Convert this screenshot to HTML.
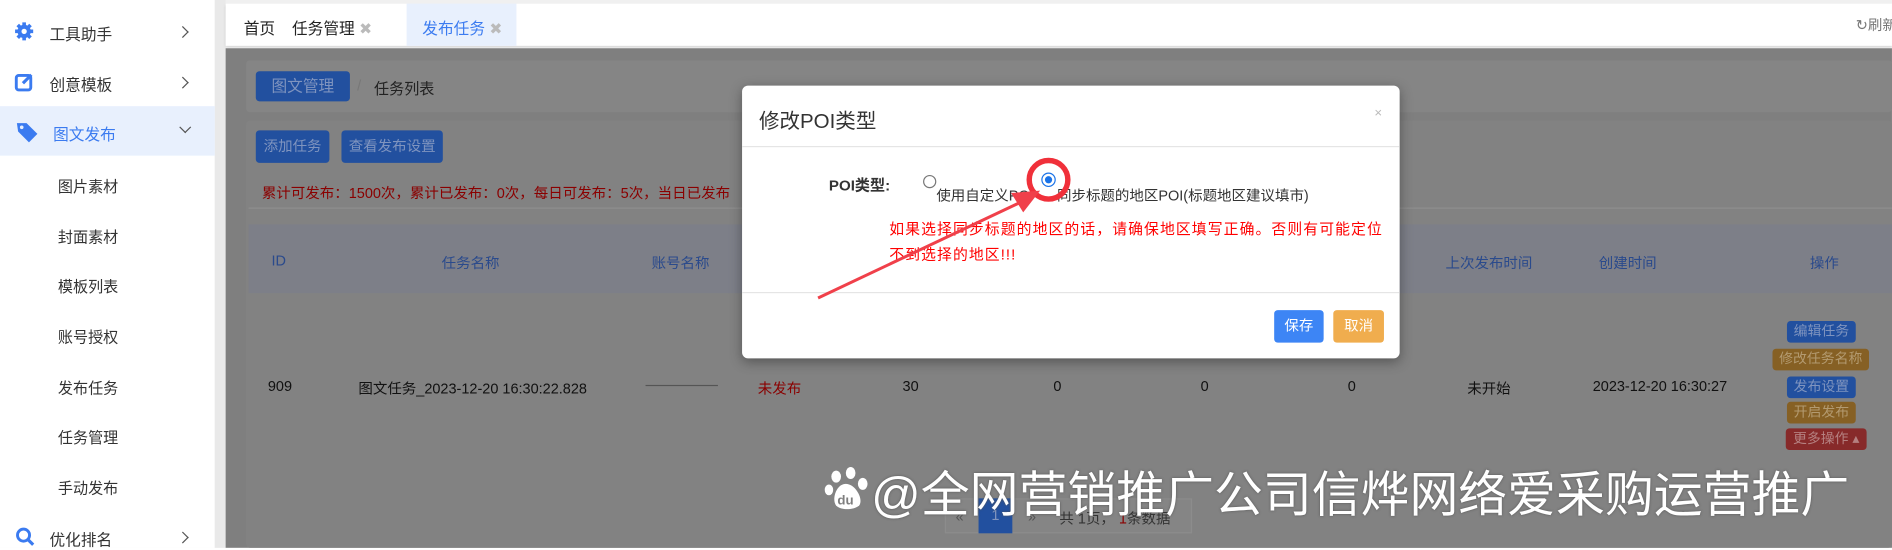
<!DOCTYPE html>
<html><head><meta charset="utf-8"><style>
*{margin:0;padding:0;box-sizing:border-box}
body{width:1892px;height:548px;overflow:hidden;background:#fff;font-family:"Liberation Sans","Noto Sans CJK SC",sans-serif;font-size:12px;color:#333}
#w{position:absolute;left:0;top:0;width:1568px;height:454px;transform:scale(1.2066);transform-origin:0 0;background:#f0f0f0}
.a{position:absolute;white-space:nowrap}
.side{left:0;top:0;width:178px;height:454px;background:#fff}
.mi{font-size:13px;color:#333}
.sub{left:48px;font-size:12.5px;color:#333}
.chev{position:absolute;left:150px;width:7px;height:7px;border-right:1.3px solid #555;border-top:1.3px solid #555;transform:rotate(45deg)}
.main{left:187px;top:40px;width:1381px;height:414px;background:#7f7f7f}
.btn{position:absolute;background:#22509f;color:#7f94bf;border-radius:3px;text-align:center;font-size:12px}
.th{color:#2a4a8c;font-size:12px}
.td{color:#111;font-size:12px}
.ob{position:absolute;border-radius:3px;text-align:center;font-size:11.5px;height:18px;line-height:18px}
</style></head><body><div id="w">
<div class="a side"></div>
<div class="a" style="left:178px;top:0;width:9px;height:454px;background:#e9e9e9"></div>
<svg class="a" style="left:12px;top:18px" width="16" height="16" viewBox="0 0 16 16"><circle cx="8" cy="8" r="5.5" fill="#3b7bf0"/><g stroke="#3b7bf0" stroke-width="3"><line x1="8" y1="0.5" x2="8" y2="15.5"/><line x1="0.5" y1="8" x2="15.5" y2="8"/><line x1="2.7" y1="2.7" x2="13.3" y2="13.3"/><line x1="13.3" y1="2.7" x2="2.7" y2="13.3"/></g><circle cx="8" cy="8" r="2.2" fill="#fff"/></svg>
<div class="a mi" style="left:41px;top:18px">工具助手</div><div class="chev" style="top:23px;left:148px"></div>
<svg class="a" style="left:12px;top:60px" width="16" height="16" viewBox="0 0 16 16"><rect x="1.5" y="2.5" width="12" height="12" rx="2" fill="none" stroke="#3b7bf0" stroke-width="2.4"/><path d="M7 9 L14 2" stroke="#3b7bf0" stroke-width="2.6"/></svg>
<div class="a mi" style="left:41px;top:60px">创意模板</div><div class="chev" style="top:65px;left:148px"></div>
<div class="a" style="left:0;top:88px;width:178px;height:41px;background:#e8f0fd"></div>
<svg class="a" style="left:13px;top:100px" width="20" height="20" viewBox="0 0 20 20"><path d="M1 2 L9 2 L18 11 L11 18 L2 9 Z" fill="#3b7bf0"/><circle cx="5" cy="5.5" r="1.5" fill="#e8f0fd"/></svg>
<div class="a mi" style="left:44px;top:101px;color:#3b7bf0">图文发布</div>
<div class="chev" style="top:102px;left:150px;transform:rotate(135deg)"></div>
<div class="a sub" style="top:144px">图片素材</div>
<div class="a sub" style="top:186px">封面素材</div>
<div class="a sub" style="top:227px">模板列表</div>
<div class="a sub" style="top:269px">账号授权</div>
<div class="a sub" style="top:311px">发布任务</div>
<div class="a sub" style="top:352px">任务管理</div>
<div class="a sub" style="top:394px">手动发布</div>
<svg class="a" style="left:13px;top:437px" width="16" height="16" viewBox="0 0 16 16"><circle cx="6.5" cy="6.5" r="5" fill="none" stroke="#3b7bf0" stroke-width="2.4"/><line x1="10" y1="10" x2="14.5" y2="14.5" stroke="#3b7bf0" stroke-width="2.6"/></svg>
<div class="a mi" style="left:41px;top:437px">优化排名</div><div class="chev" style="top:442px;left:148px"></div>
<div class="a" style="left:187px;top:3px;width:1381px;height:35px;background:#fff;box-shadow:0 1px 2px #ccc"></div>
<div class="a" style="left:202px;top:13px;font-size:13px;color:#222">首页</div>
<div class="a" style="left:242px;top:13px;font-size:13px;color:#222">任务管理 <span style="color:#bbb">✖</span></div>
<div class="a" style="left:337px;top:3px;width:91px;height:35px;background:#e8f0fd"></div>
<div class="a" style="left:350px;top:13px;font-size:13px;color:#3b7bf0">发布任务 <span style="color:#bbb">✖</span></div>
<div class="a" style="left:1538px;top:12px;font-size:12px;color:#777">↻刷新</div>
<div class="a main"></div>
<div class="a" style="left:204px;top:50px;width:1364px;height:43px;background:#858585;border-radius:3px"></div>
<div class="btn" style="left:212px;top:59px;width:78px;height:25px;line-height:25px;font-size:13px">图文管理</div>
<div class="a" style="left:296px;top:64px;color:#777;font-size:12px">/</div>
<div class="a" style="left:310px;top:63px;color:#222;font-size:12.5px">任务列表</div>
<div class="a" style="left:204px;top:100px;width:1364px;height:354px;background:#828282;border-radius:3px"></div>
<div class="btn" style="left:212px;top:108px;width:61px;height:27px;line-height:27px">添加任务</div>
<div class="btn" style="left:283px;top:108px;width:84px;height:27px;line-height:27px">查看发布设置</div>
<div class="a" style="left:217px;top:151px;color:#8a0000;font-size:12px">累计可发布：1500次，累计已发布：0次，每日可发布：5次，当日已发布</div>
<div class="a" style="left:206px;top:172px;width:1362px;height:1px;background:#8e8e8e"></div>
<div class="a" style="left:206px;top:186px;width:1362px;height:57px;background:#7d7f88"></div>
<div class="a th" style="left:225px;top:209px">ID</div>
<div class="a th" style="left:366px;top:209px">任务名称</div>
<div class="a th" style="left:540px;top:209px">账号名称</div>
<div class="a th" style="left:1198px;top:209px">上次发布时间</div>
<div class="a th" style="left:1325px;top:209px">创建时间</div>
<div class="a th" style="left:1500px;top:209px">操作</div>
<div class="a td" style="left:222px;top:313px">909</div>
<div class="a td" style="left:297px;top:313px">图文任务_2023-12-20 16:30:22.828</div>
<div class="a" style="left:535px;top:319px;width:60px;height:1px;background:#555"></div>
<div class="a" style="left:628px;top:313px;color:#8a0000">未发布</div>
<div class="a td" style="left:748px;top:313px">30</div>
<div class="a td" style="left:873px;top:313px">0</div>
<div class="a td" style="left:995px;top:313px">0</div>
<div class="a td" style="left:1117px;top:313px">0</div>
<div class="a td" style="left:1216px;top:313px">未开始</div>
<div class="a td" style="left:1320px;top:313px">2023-12-20 16:30:27</div>
<div class="ob" style="left:1481px;top:266px;width:57px;background:#22509f;color:#7f94bf">编辑任务</div>
<div class="ob" style="left:1469px;top:289px;width:80px;background:#866024;color:#b39a70">修改任务名称</div>
<div class="ob" style="left:1481px;top:312px;width:57px;background:#22509f;color:#7f94bf">发布设置</div>
<div class="ob" style="left:1481px;top:333px;width:57px;background:#866024;color:#b39a70">开启发布</div>
<div class="ob" style="left:1480px;top:355px;width:67px;background:#872a2a;color:#b58080">更多操作 ▴</div>
<div class="a" style="left:783px;top:413px;width:205px;height:29px;border:1px solid #8c8c8c;background:#858585"></div>
<div class="a" style="left:792px;top:421px;color:#555">«</div>
<div class="a" style="left:811px;top:413px;width:28px;height:29px;background:#22509f;color:#7f94bf;text-align:center;line-height:29px">1</div>
<div class="a" style="left:852px;top:421px;color:#555">»</div>
<div class="a" style="left:878px;top:421px;color:#333">共 1页， <span style="color:#8a0000">1</span>条数据</div>
<div class="a" style="left:615px;top:71px;width:545px;height:226px;background:#fff;border-radius:5px;box-shadow:0 3px 10px rgba(0,0,0,.35)"></div>
<div class="a" style="left:629px;top:86px;font-size:17px;color:#333">修改POI类型</div>
<div class="a" style="left:1139px;top:88px;font-size:11px;color:#bbb">×</div>
<div class="a" style="left:615px;top:121px;width:545px;height:1px;background:#e5e5e5"></div>
<div class="a" style="left:687px;top:143px;font-size:12.5px;font-weight:bold;color:#333">POI类型:</div>
<div class="a" style="left:765px;top:145px;width:11px;height:11px;border:1px solid #777;border-radius:50%"></div>
<div class="a" style="left:776px;top:153px;font-size:12px;color:#333">使用自定义POI</div>
<div class="a" style="left:863px;top:143px;width:12px;height:12px;border:1px solid #1a73e8;border-radius:50%;background:#fff"></div>
<div class="a" style="left:866px;top:146px;width:6px;height:6px;border-radius:50%;background:#1a73e8"></div>
<div class="a" style="left:876px;top:153px;font-size:12px;color:#333">同步标题的地区POI(标题地区建议填市)</div>
<div class="a" style="left:737px;top:180px;font-size:12.3px;letter-spacing:0.9px;color:#f00;line-height:21px;width:410px;white-space:normal">如果选择同步标题的地区的话，请确保地区填写正确。否则有可能定位不到选择的地区!!!</div>
<div class="a" style="left:615px;top:242px;width:545px;height:1px;background:#e5e5e5"></div>
<div class="a" style="left:1056px;top:257px;width:41px;height:27px;background:#3d85f5;color:#fff;border-radius:3px;text-align:center;line-height:27px">保存</div>
<div class="a" style="left:1105px;top:257px;width:42px;height:27px;background:#f0ad4e;color:#fff;border-radius:3px;text-align:center;line-height:27px">取消</div>
<svg class="a" style="left:0;top:0" width="1568" height="454">
<circle cx="869" cy="149" r="16" fill="none" stroke="#f0303a" stroke-width="4.5"/>
<line x1="678" y1="247" x2="845" y2="168" stroke="#f0404a" stroke-width="2.5"/>
<polygon points="862,158 838,160 848,176" fill="#f0404a"/>
</svg>
<svg class="a" style="left:683px;top:386px" width="38" height="38" viewBox="0 0 38 38"><g fill="#fff"><ellipse cx="10" cy="9" rx="4" ry="5"/><ellipse cx="22" cy="6" rx="4" ry="5"/><ellipse cx="32" cy="15" rx="4" ry="5"/><ellipse cx="4" cy="20" rx="3.5" ry="4.5"/><path d="M18 15 C10 15 6 28 10 33 C14 37 24 37 29 33 C33 28 26 15 18 15Z"/></g><text x="11" y="32" font-size="11" font-weight="bold" fill="#7f7f7f" font-family="Liberation Sans">du</text></svg>
<div class="a" style="left:722px;top:377px;font-size:40.5px;color:#fff;font-family:'Liberation Sans','Noto Sans CJK SC',sans-serif;text-shadow:0 0 2px #555">@全网营销推广公司信烨网络爱采购运营推广</div>
</div></body></html>
